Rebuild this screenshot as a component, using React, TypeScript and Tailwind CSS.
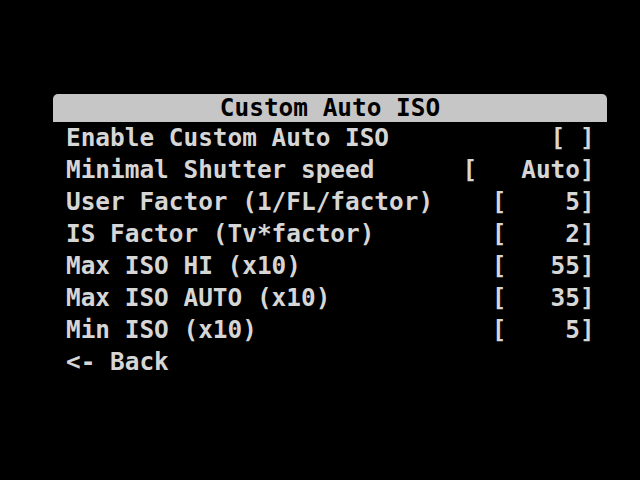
const rows: { label: string; value: string }[] = [
  { label: "Enable Custom Auto ISO", value: "[ ]" },
  { label: "Minimal Shutter speed", value: "[   Auto]" },
  { label: "User Factor (1/FL/factor)", value: "[    5]" },
  { label: "IS Factor (Tv*factor)", value: "[    2]" },
  { label: "Max ISO HI (x10)", value: "[   55]" },
  { label: "Max ISO AUTO (x10)", value: "[   35]" },
  { label: "Min ISO (x10)", value: "[    5]" },
];

const COLS = 36;

export default function App() {
  return (
    <div className="w-[640px] h-[480px] bg-black pt-[94px] pl-[53px] font-['DejaVu_Sans_Mono',monospace] font-bold text-[24.4px]">
      <div className="w-[554px]">
        {/* Menu title bar */}
        <div className="h-[28px] leading-[28px] bg-[#c6c6c6] rounded-t-[5px] text-center text-black whitespace-pre">
          Custom Auto ISO
        </div>

        {/* Menu entries */}
        <div className="pl-[13px] text-[#d6d6d6] leading-[32px]">
          {rows.map((r) => (
            <div key={r.label} className="whitespace-pre">
              {r.label + " ".repeat(COLS - r.label.length - r.value.length) + r.value}
            </div>
          ))}
          <div className="whitespace-pre">{"<- Back"}</div>
        </div>
      </div>
    </div>
  );
}
